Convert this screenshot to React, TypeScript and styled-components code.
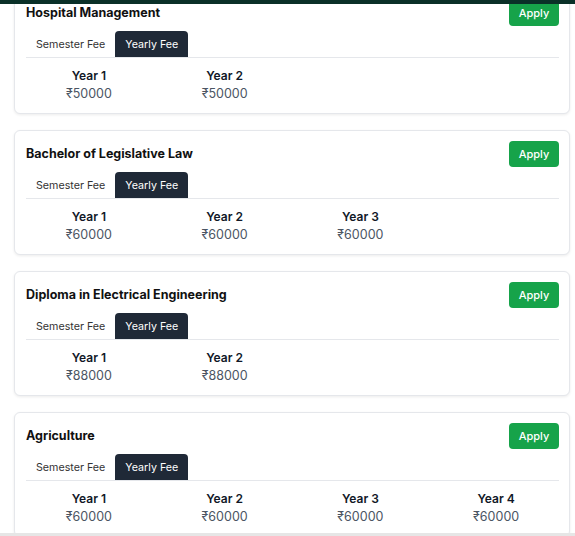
import React, { useState } from "react";
import styled, { createGlobalStyle } from "styled-components";

const GlobalStyle = createGlobalStyle`
  html, body { margin: 0; padding: 0; background: #ffffff; }
  body { font-family: "Inter", "Noto Sans", sans-serif; overflow: hidden; }
  * { box-sizing: border-box; }
`;

const TopBar = styled.div`
  position: fixed;
  top: 0;
  left: 0;
  right: 0;
  height: 4px;
  background: #0a3028;
  z-index: 10;
`;

const BottomBar = styled.div`
  position: fixed;
  left: 0;
  right: 0;
  bottom: 0;
  height: 3px;
  background: #e6e6e6;
  z-index: 10;
`;

const List = styled.div`
  display: flex;
  flex-direction: column;
  gap: 16px;
  margin-top: -11px;
  padding: 0 5px 0 14px;
`;

const Card = styled.div`
  background: #fff;
  border: 1px solid #e5e7eb;
  border-radius: 6px;
  box-shadow: 0 1px 3px rgba(0, 0, 0, 0.08);
  padding: 10px 10px 11px 11px;
  height: 125px;
`;

const Header = styled.div`
  display: flex;
  justify-content: space-between;
  align-items: center;
  height: 26px;
`;

const Title = styled.h3`
  margin: 0;
  font-size: 12.5px;
  font-weight: 700;
  color: #111111;
  line-height: 16px;
`;

const ApplyButton = styled.button`
  width: 50px;
  height: 26px;
  border: none;
  border-radius: 4px;
  background: #16a34a;
  color: #ffffff;
  font-family: inherit;
  font-size: 11px;
  font-weight: 500;
  cursor: pointer;
`;

const TabList = styled.div`
  display: flex;
  margin-top: 5px;
  border-bottom: 1px solid #e5e7eb;
`;

const Tab = styled.button<{ $active: boolean }>`
  height: 26px;
  padding: 0 10px;
  border: none;
  border-radius: 4px 4px 0 0;
  background: ${(p) => (p.$active ? "#1f2937" : "transparent")};
  color: ${(p) => (p.$active ? "#ffffff" : "#333333")};
  font-family: inherit;
  font-size: 10.7px;
  font-weight: 400;
  cursor: pointer;
`;

const YearGrid = styled.div`
  display: grid;
  grid-template-columns: repeat(4, 1fr);
  column-gap: 10px;
  padding-top: 9px;
`;

const YearCell = styled.div`
  display: flex;
  flex-direction: column;
  align-items: center;
`;

const YearLabel = styled.div`
  font-size: 12px;
  font-weight: 600;
  color: #111827;
  line-height: 18px;
`;

const YearValue = styled.div`
  font-size: 12.5px;
  font-weight: 400;
  color: #4b5563;
  line-height: 18px;
`;

type Course = { name: string; fees: number[] };

const courses: Course[] = [
  { name: "Hospital Management", fees: [50000, 50000] },
  { name: "Bachelor of Legislative Law", fees: [60000, 60000, 60000] },
  { name: "Diploma in Electrical Engineering", fees: [88000, 88000] },
  { name: "Agriculture", fees: [60000, 60000, 60000, 60000] },
];

function CourseCard({ course }: { course: Course }) {
  const [tab, setTab] = useState<"semester" | "yearly">("yearly");
  return (
    <Card>
      <Header>
        <Title>{course.name}</Title>
        <ApplyButton>Apply</ApplyButton>
      </Header>
      <TabList>
        <Tab $active={tab === "semester"} onClick={() => setTab("semester")}>
          Semester Fee
        </Tab>
        <Tab $active={tab === "yearly"} onClick={() => setTab("yearly")}>
          Yearly Fee
        </Tab>
      </TabList>
      <YearGrid>
        {course.fees.map((fee, i) => (
          <YearCell key={i}>
            <YearLabel>Year {i + 1}</YearLabel>
            <YearValue>₹{fee}</YearValue>
          </YearCell>
        ))}
      </YearGrid>
    </Card>
  );
}

export default function App() {
  return (
    <>
      <GlobalStyle />
      <TopBar />
      <List>
        {courses.map((c) => (
          <CourseCard key={c.name} course={c} />
        ))}
      </List>
      <BottomBar />
    </>
  );
}
